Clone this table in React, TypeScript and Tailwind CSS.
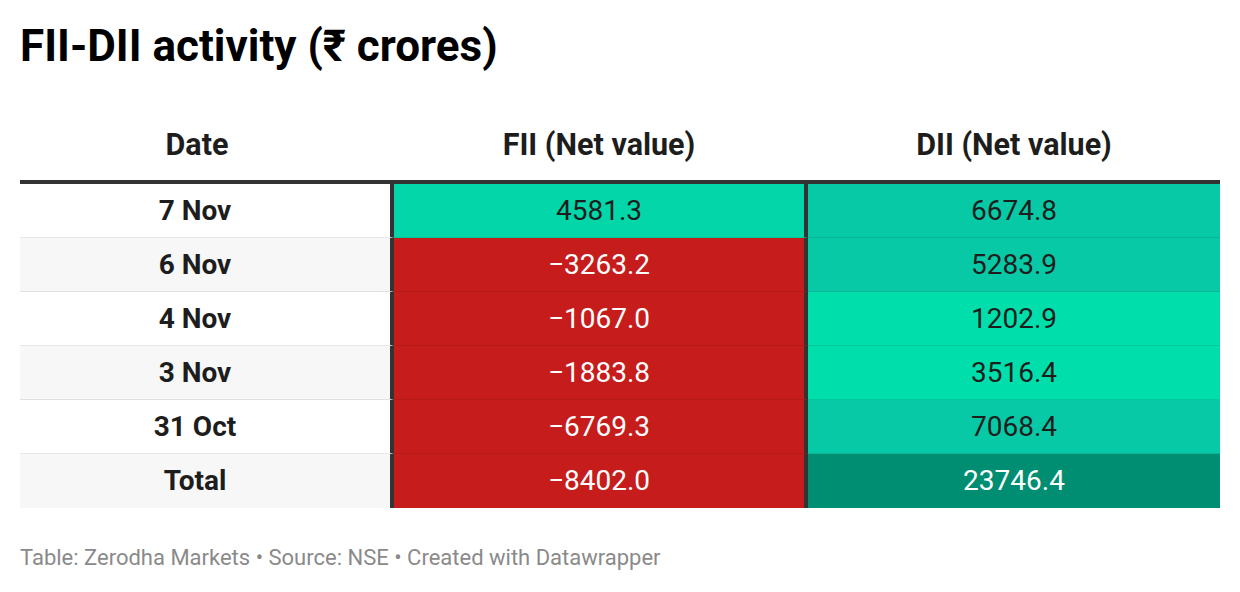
import React from 'react'

type Row = {
  date: string
  fii: string
  dii: string
  fiiBg: string
  diiBg: string
  fiiText: string
  diiText: string
}

const rows: Row[] = [
  { date: '7 Nov', fii: '4581.3', dii: '6674.8', fiiBg: 'bg-[#03d6a8]', diiBg: 'bg-[#08c9a5]', fiiText: 'text-[#1d1d1d]', diiText: 'text-[#1d1d1d]' },
  { date: '6 Nov', fii: '−3263.2', dii: '5283.9', fiiBg: 'bg-[#c71c1c]', diiBg: 'bg-[#08c9a5]', fiiText: 'text-white', diiText: 'text-[#1d1d1d]' },
  { date: '4 Nov', fii: '−1067.0', dii: '1202.9', fiiBg: 'bg-[#c71c1c]', diiBg: 'bg-[#00dfab]', fiiText: 'text-white', diiText: 'text-[#1d1d1d]' },
  { date: '3 Nov', fii: '−1883.8', dii: '3516.4', fiiBg: 'bg-[#c71c1c]', diiBg: 'bg-[#00dfab]', fiiText: 'text-white', diiText: 'text-[#1d1d1d]' },
  { date: '31 Oct', fii: '−6769.3', dii: '7068.4', fiiBg: 'bg-[#c71c1c]', diiBg: 'bg-[#08c9a5]', fiiText: 'text-white', diiText: 'text-[#1d1d1d]' },
  { date: 'Total', fii: '−8402.0', dii: '23746.4', fiiBg: 'bg-[#c71c1c]', diiBg: 'bg-[#008e72]', fiiText: 'text-white', diiText: 'text-white' },
]

const App = () => {
  return (
    <div
      className="w-[1240px] h-[592px] bg-white px-5 pt-[18px]"
      style={{ fontFamily: 'Roboto, "Noto Sans", sans-serif' }}
    >
      <h1 className="text-[44px] leading-[56px] font-bold text-black">
        FII-DII activity (₹ crores)
      </h1>

      <div className="mt-[36px]">
        {/* header */}
        <div className="flex h-[74px] items-center border-b-4 border-[#333333] text-[30.5px] font-bold text-[#1d1d1d]">
          <div className="w-[374px] text-center pr-[20px]">Date</div>
          <div className="w-[414px] text-center pr-[4px]">FII (Net value)</div>
          <div className="flex-1 text-center">DII (Net value)</div>
        </div>

        {rows.map((r, i) => {
          const last = i === rows.length - 1
          const sep = last ? '' : 'border-b border-b-black/[0.09]'
          return (
            <div key={r.date} className="flex h-[54px] text-[28px]">
              <div
                className={`w-[374px] flex items-center justify-center pr-[20px] font-bold text-[#1d1d1d] border-r-4 border-r-[#333333] ${sep} ${i % 2 === 1 ? 'bg-[#f7f7f7]' : 'bg-white'}`}
              >
                {r.date}
              </div>
              <div className={`w-[414px] flex items-center justify-center border-r-4 border-r-[#333333] ${sep} ${r.fiiBg} ${r.fiiText}`}>
                {r.fii}
              </div>
              <div className={`flex-1 flex items-center justify-center ${sep} ${r.diiBg} ${r.diiText}`}>
                {r.dii}
              </div>
            </div>
          )
        })}
      </div>

      <p className="mt-[37px] text-[22px] leading-[26px] text-[#8a8a8a]">
        Table: Zerodha Markets • Source: NSE • Created with Datawrapper
      </p>
    </div>
  )
}

export default App
